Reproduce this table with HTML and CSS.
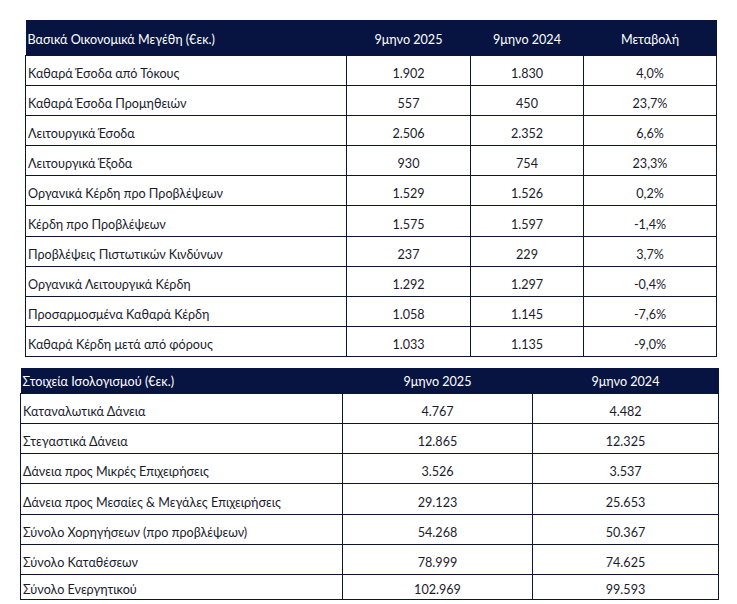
FILE: index.html
```html
<!DOCTYPE html>
<html lang="el">
<head>
<meta charset="utf-8">
<link rel="stylesheet" href="styles.css">
</head>
<body>
<div class="page">
  <table class="fin t1">
    <colgroup><col class="c1"><col class="c2"><col class="c3"><col class="c4"></colgroup>
    <thead>
      <tr><th class="lbl">Βασικά Οικονομικά Μεγέθη (€εκ.)</th><th>9μηνο 2025</th><th>9μηνο 2024</th><th>Μεταβολή</th></tr>
    </thead>
    <tbody>
      <tr><td class="lbl">Καθαρά Έσοδα από Τόκους</td><td>1.902</td><td>1.830</td><td>4,0%</td></tr>
      <tr><td class="lbl">Καθαρά Έσοδα Προμηθειών</td><td>557</td><td>450</td><td>23,7%</td></tr>
      <tr><td class="lbl">Λειτουργικά Έσοδα</td><td>2.506</td><td>2.352</td><td>6,6%</td></tr>
      <tr><td class="lbl">Λειτουργικά Έξοδα</td><td>930</td><td>754</td><td>23,3%</td></tr>
      <tr><td class="lbl">Οργανικά Κέρδη προ Προβλέψεων</td><td>1.529</td><td>1.526</td><td>0,2%</td></tr>
      <tr><td class="lbl">Κέρδη προ Προβλέψεων</td><td>1.575</td><td>1.597</td><td>-1,4%</td></tr>
      <tr><td class="lbl">Προβλέψεις Πιστωτικών Κινδύνων</td><td>237</td><td>229</td><td>3,7%</td></tr>
      <tr><td class="lbl">Οργανικά Λειτουργικά Κέρδη</td><td>1.292</td><td>1.297</td><td>-0,4%</td></tr>
      <tr><td class="lbl">Προσαρμοσμένα Καθαρά Κέρδη</td><td>1.058</td><td>1.145</td><td>-7,6%</td></tr>
      <tr><td class="lbl">Καθαρά Κέρδη μετά από φόρους</td><td>1.033</td><td>1.135</td><td>-9,0%</td></tr>
    </tbody>
  </table>

  <table class="fin t2">
    <colgroup><col class="d1"><col class="d2"><col class="d3"></colgroup>
    <thead>
      <tr><th class="lbl">Στοιχεία Ισολογισμού (€εκ.)</th><th>9μηνο 2025</th><th>9μηνο 2024</th></tr>
    </thead>
    <tbody>
      <tr><td class="lbl">Καταναλωτικά Δάνεια</td><td>4.767</td><td>4.482</td></tr>
      <tr><td class="lbl">Στεγαστικά Δάνεια</td><td>12.865</td><td>12.325</td></tr>
      <tr><td class="lbl">Δάνεια προς Μικρές Επιχειρήσεις</td><td>3.526</td><td>3.537</td></tr>
      <tr><td class="lbl">Δάνεια προς Μεσαίες &amp; Μεγάλες Επιχειρήσεις</td><td>29.123</td><td>25.653</td></tr>
      <tr><td class="lbl">Σύνολο Χορηγήσεων (προ προβλέψεων)</td><td>54.268</td><td>50.367</td></tr>
      <tr><td class="lbl">Σύνολο Καταθέσεων</td><td>78.999</td><td>74.625</td></tr>
      <tr class="last"><td class="lbl">Σύνολο Ενεργητικού</td><td>102.969</td><td>99.593</td></tr>
    </tbody>
  </table>
</div>
</body>
</html>
```

FILE: styles.css
```css
html, body {
  margin: 0;
  padding: 0;
  background: #ffffff;
}

.page {
  padding-top: 20px;
  font-family: "Lato", "Noto Sans", sans-serif;
  font-size: 12.6px;
  color: #1b1b2b;
}

.fin {
  border-collapse: collapse;
  table-layout: fixed;
}

.fin th {
  background: #071441;
  color: #ffffff;
  font-weight: normal;
  text-align: center;
  padding: 4px 2px 0 2px;
  border: none;
  box-sizing: border-box;
}

.fin td {
  border: 1px solid #0c1633;
  text-align: center;
  padding: 6px 2px 0 2px;
  box-sizing: border-box;
}

.fin .lbl {
  text-align: left;
}

.t1 {
  margin-left: 25px;
  width: 691px;
}

.t1 th { height: 35px; }
.t1 td { height: 30.2px; }

.t1 .c1 { width: 321px; }
.t1 .c2 { width: 124px; }
.t1 .c3 { width: 113px; }
.t1 .c4 { width: 133px; }

.t2 {
  margin-top: 11px;
  margin-left: 20px;
  width: 698px;
}

.t2 th { height: 25px; padding-top: 2px; }
.t2 td { height: 30.2px; }
.t2 .last td { height: 25px; padding-top: 4px; }

.t2 .d1 { width: 322px; }
.t2 .d2 { width: 190px; }
.t2 .d3 { width: 186px; }
```
